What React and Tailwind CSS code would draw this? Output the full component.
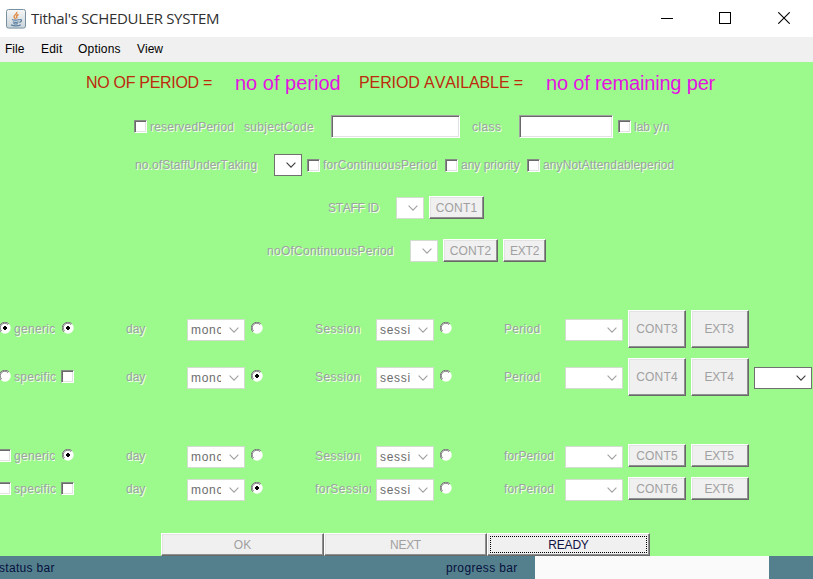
import React from "react";

function Label({ children, className = "" }) {
  return (
    <span className={`block shrink-0 overflow-hidden whitespace-nowrap leading-[16px] text-[#9da39d] [text-shadow:1px_1px_0_#f4fff2] ${className}`}>
      {children}
    </span>
  );
}

function Check({ className = "" }) {
  return (
    <span className={`block size-[13px] shrink-0 border border-t-[#868c86] border-l-[#868c86] border-r-white border-b-white bg-white shadow-[inset_1px_1px_0_#696969,inset_-1px_-1px_0_#e3e3e3] ${className}`} />
  );
}

function Radio({ on = false }) {
  return (
    <svg viewBox="0 0 12 12" className="ml-px block size-3 shrink-0">
      <circle cx="6" cy="6" r="5.7" fill="#fff" />
      <path d="M1.9 9.9A5.3 5.3 0 0 1 9.9 1.9" fill="none" stroke="#7c7c7c" strokeWidth="1" />
      <path d="M2.6 9A4.5 4.5 0 0 1 9 2.6" fill="none" stroke="#626262" strokeWidth="0.8" />
      {on && <path d="M5 4h2v1h1v2H7v1H5V7H4V5h1z" fill="#000" />}
    </svg>
  );
}

function Chevron({ dark }) {
  return (
    <svg viewBox="0 0 10 6" className="block h-1.5 w-2.5 shrink-0" fill="none" stroke={dark ? "#3a3a3a" : "#a0a0a0"} strokeWidth="1.1">
      <path d="M0.6 0.7 5 5.1 9.4 0.7" />
    </svg>
  );
}

function Select({ text = "", dark = false, className = "" }) {
  return (
    <span className={`flex h-[22px] shrink-0 items-center justify-between border bg-white pr-[5px] pl-[3px] ${dark ? "border-[#707070]" : "border-[#d2dccf]"} ${className}`}>
      <span className="block w-[30px] min-w-0 shrink overflow-hidden whitespace-nowrap leading-4 tracking-[0.7px] text-[#6d6d6d]">{text}</span>
      <Chevron dark={dark} />
    </span>
  );
}

function Btn({ children, className = "" }) {
  return (
    <button className={`flex h-[23px] shrink-0 items-center justify-center border border-t-white border-l-white border-r-[#696969] border-b-[#696969] bg-[#f0f0f0] text-[#a0a0a0] shadow-[inset_-1px_-1px_0_#8f8f8f,inset_1px_1px_0_#e3e3e3] ${className}`}>
      {children}
    </button>
  );
}

function Field({ className }) {
  return (
    <span className={`block h-[23px] shrink-0 border border-t-[#a0a0a0] border-l-[#a0a0a0] border-r-white border-b-white bg-white shadow-[inset_1px_1px_0_#696969,inset_-1px_-1px_0_#e3e3e3] ${className}`} />
  );
}

function ScheduleRow({ kind, lead, second, session, sessionOn = false, period, n, tall = false, extra = false }) {
  const mark = (m) => (m === "check" ? <Check /> : <Radio on={m === "on"} />);
  const top = tall ? "pt-3" : "pt-[5px]";
  const labelTop = tall ? "pt-[11px]" : "pt-1";
  const selTop = tall ? "mt-[9px]" : "mt-[2px] h-[21px]";
  const btn = tall ? "h-[38px]" : "";
  return (
    <div className={`ml-[-2px] grid w-[814px] grid-cols-[repeat(13,58px)] gap-x-[5px] ${tall ? "h-[38px]" : "h-[23px]"}`}>
      <div className="flex">
        <div className={top}>{mark(lead)}</div>
        <Label className={`${labelTop} ml-[3px] tracking-[0.3px]`}>{kind}</Label>
      </div>
      <div className={top}>{mark(second)}</div>
      <Label className={`${labelTop} pl-[2px]`}>day</Label>
      <Select text="monc" className={selTop} />
      <div className={top}>{mark(sessionOn ? "on" : "off")}</div>
      <Label className={`${labelTop} pl-[2px] tracking-[0.45px]`}>{session}</Label>
      <Select text="sessi" className={selTop} />
      <div className={top}>{mark("off")}</div>
      <Label className={`${labelTop} pl-[2px] ${period === "Period" ? "tracking-[0.3px]" : "tracking-[0.15px]"}`}>{period}</Label>
      <Select className={selTop} />
      <Btn className={`${btn} tracking-[0.2px]`}>CONT{n}</Btn>
      <Btn className={`${btn} pr-[2px] tracking-[-0.2px]`}>EXT{n}</Btn>
      {extra && <Select dark className={selTop} />}
    </div>
  );
}

function TitleBar() {
  return (
    <header className="flex h-[37px] items-center bg-white">
      <svg viewBox="0 0 20 20" className="ml-[6px] block size-5" fill="none">
        <defs>
          <linearGradient id="tile" x1="0" y1="0" x2="0" y2="1">
            <stop offset="0" stopColor="#f7f7f6" />
            <stop offset="1" stopColor="#c9d3da" />
          </linearGradient>
        </defs>
        <rect x="0.5" y="0.5" width="19" height="18.6" rx="2" fill="url(#tile)" stroke="#7890a0" />
        <path d="M10.7 2.8c1.2 2-3.3 3.1-2.6 5 .2.9 1 1.3 1.3 2.3M12.5 5.5c-3.3 1.2-1.3 2.3-1.8 4" stroke="#e08a45" strokeWidth="1.4" />
        <path d="M6 10.5c1.6 1 5.5.9 7.5 0M6.8 12.7c1.9.8 4 .8 5.8 0M7.4 14.5c1.5.6 3.2.6 4.5 0M13.7 10.6c2.7-.4 2.2 2.1-.4 2.8M5 15.7c2.6 1.7 7.6 1.5 9.8.1" stroke="#5a7fa0" strokeWidth="1.2" />
      </svg>
      <h1 className="ml-[5px] w-[400px] whitespace-nowrap pb-px font-['Open_Sans','Noto_Sans',sans-serif] text-[15px] leading-5 tracking-[-0.32px] text-[#303030]">
        Tithal's SCHEDULER SYSTEM
      </h1>
      <div className="ml-auto flex items-center pr-[23px] pb-px text-black">
        <span className="h-px w-3 bg-current" />
        <span className="ml-[46px] size-3 border border-current" />
        <svg viewBox="0 0 12 12" className="ml-[47px] block size-3" stroke="currentColor" strokeWidth="1.1">
          <path d="M.3.3 11.7 11.7M11.7.3.3 11.7" />
        </svg>
      </div>
    </header>
  );
}

export default function App() {
  return (
    <div className="flex h-[579px] w-[813px] flex-col overflow-hidden bg-[#9cf98c] font-['Liberation_Sans',Arial,sans-serif] text-[12px] [font-kerning:none]">
      <TitleBar />
      <nav className="flex h-[25px] shrink-0 items-center bg-[#f0f0f0] pb-px leading-4 text-black">
        <span className="ml-[5px] w-[36px]">File</span>
        <span className="w-[37px] tracking-[0.2px]">Edit</span>
        <span className="w-[59px] tracking-[0.2px]">Options</span>
        <span>View</span>
      </nav>
      <main className="flex h-[494px] shrink-0 flex-col">
        <div className="flex h-[42px] items-center whitespace-nowrap">
          <span className="ml-[86px] w-[149px] pb-px text-[16px] leading-5 tracking-[-0.3px] text-[#bd2a0c]">NO OF PERIOD =</span>
          <span className="w-[124px] pb-px text-[20px] leading-6 text-[#e411e2]">no of period</span>
          <span className="w-[187px] pb-px text-[16px] leading-5 tracking-[-0.1px] text-[#bd2a0c]">PERIOD AVAILABLE =</span>
          <span className="pb-px text-[20px] leading-6 tracking-[-0.17px] text-[#e411e2]">no of remaining per</span>
        </div>
        <div className="mt-[11px] flex h-[23px] items-center">
          <Check className="ml-[134px]" />
          <Label className="ml-[3px] w-[94px] tracking-[0.2px]">reservedPeriod</Label>
          <Label className="w-[87px] tracking-[0.3px]">subjectCode</Label>
          <Field className="w-[129px]" />
          <Label className="ml-[12px] w-[47px] tracking-[0.4px]">class</Label>
          <Field className="w-[94px]" />
          <Check className="ml-[5px]" />
          <Label className="ml-[3px]">lab y/n</Label>
        </div>
        <div className="mt-4 flex h-[22px] items-center">
          <Label className="ml-[135px] w-[139px] tracking-[0.1px]">no.ofStaffUnderTaking</Label>
          <Select dark className="w-[28px]" />
          <Check className="ml-[5px]" />
          <Label className="ml-[3px] w-[122px] tracking-[0.25px]">forContinuousPeriod</Label>
          <Check />
          <Label className="ml-[3px] w-[66px]">any priority</Label>
          <Check />
          <Label className="ml-[3px] tracking-[0.12px]">anyNotAttendableperiod</Label>
        </div>
        <div className="mt-5 flex h-[23px] items-center">
          <Label className="ml-[328px] w-[68px] tracking-[-0.3px]">STAFF ID</Label>
          <Select className="w-[28px]" />
          <Btn className="ml-[5px] w-[55px] tracking-[0.2px]">CONT1</Btn>
        </div>
        <div className="mt-5 flex h-[23px] items-center">
          <Label className="ml-[267px] w-[143px] tracking-[0.27px]">noOfContinuousPeriod</Label>
          <Select className="w-[28px]" />
          <Btn className="ml-[5px] w-[55px] tracking-[0.2px]">CONT2</Btn>
          <Btn className="ml-[5px] w-[43px] tracking-[-0.2px]">EXT2</Btn>
        </div>
        <div className="mt-12 flex flex-col gap-[10px]">
          <ScheduleRow kind="generic" lead="on" second="on" session="Session" period="Period" n={3} tall />
          <ScheduleRow kind="specific" lead="off" second="check" session="Session" sessionOn period="Period" n={4} tall extra />
        </div>
        <div className="mt-12 flex flex-col gap-[10px]">
          <ScheduleRow kind="generic" lead="check" second="on" session="Session" period="forPeriod" n={5} />
          <ScheduleRow kind="specific" lead="check" second="check" session="forSession" sessionOn period="forPeriod" n={6} />
        </div>
        <div className="mt-auto ml-[161px] flex">
          <Btn className="w-[163px]">OK</Btn>
          <Btn className="w-[163px] tracking-[-0.3px]">NEXT</Btn>
          <Btn className="w-[163px] p-[2px]">
            <span className="flex h-[17px] w-full items-center justify-center border border-dotted border-black tracking-[-0.2px] text-[#111144]">READY</span>
          </Btn>
        </div>
      </main>
      <footer className="flex h-[23px] shrink-0 items-center bg-[#54808e] leading-4 text-[#06103c]">
        <span className="-ml-px w-[447px] tracking-[0.3px]">status bar</span>
        <span className="w-[89px] tracking-[0.35px]">progress bar</span>
        <span className="h-full w-[234px] bg-[#fafafa]" />
      </footer>
    </div>
  );
}
